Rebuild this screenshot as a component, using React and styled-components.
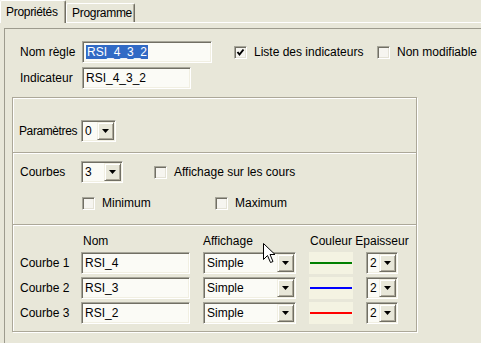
import React from 'react';
import styled, { createGlobalStyle } from 'styled-components';

const GlobalStyle = createGlobalStyle`
  html, body {
    margin: 0;
    padding: 0;
    background: #e8e7d9;
  }
  body {
    font-family: "Liberation Sans", Arial, sans-serif;
    font-size: 12px;
    color: #000;
    overflow: hidden;
  }
`;

const Window = styled.div`
  position: relative;
  width: 481px;
  height: 343px;
  overflow: hidden;
  background: #e8e7d9;
`;

const TabStrip = styled.div`
  display: flex;
  align-items: flex-end;
  height: 22px;
  position: relative;
  z-index: 1;
`;

const Tab = styled.div`
  width: ${(p) => p.$width}px;
  height: ${(p) => (p.$active ? 23 : 19)}px;
  margin-bottom: ${(p) => (p.$active ? -1 : 0)}px;
  box-sizing: border-box;
  padding-left: 5px;
  display: flex;
  align-items: center;
  font-size: 12px;
  letter-spacing: -0.3px;
  white-space: nowrap;
  background: #e8e7d9;
  border-top: 1px solid #fff;
  border-left: 1px solid #fff;
  border-right: 1px solid #716f64;
  box-shadow: inset -1px 0 0 #aca899;
  border-radius: 2px 2px 0 0;
`;

const Panel = styled.div`
  border-top: 1px solid #fff;
  padding: 5px 0 0 4px;
`;

const Frame = styled.div`
  border-top: 1px solid #9d9b8e;
  border-left: 1px solid #9d9b8e;
  height: 320px;
  box-sizing: border-box;
`;

const TopForm = styled.div`
  display: flex;
  flex-direction: column;
  gap: 4px;
  padding: 12px 0 0 15px;
`;

const FormRow = styled.div`
  display: flex;
  align-items: center;
  height: 22px;
`;

const FieldLabel = styled.span`
  width: ${(p) => p.$width}px;
  flex: none;
  white-space: nowrap;
  letter-spacing: ${(p) => p.$tight ? '-0.4px' : 'normal'};
`;

const TextBox = styled.div`
  width: ${(p) => p.$width}px;
  height: 22px;
  flex: none;
  box-sizing: border-box;
  display: flex;
  align-items: center;
  padding-left: 3px;
  background: #fbfbf6;
  border: 1px solid;
  border-color: #a7a69a #fff #fff #a7a69a;
  box-shadow: inset 1px 1px 0 #716f64, inset -1px -1px 0 #f1efe2;
  white-space: nowrap;
`;

const Selected = styled.span`
  background: #316ac5;
  color: #fff;
  padding: 0 1px;
  line-height: 14px;
`;

const CheckItem = styled.label`
  display: flex;
  align-items: center;
  gap: 7px;
  width: ${(p) => (p.$width ? `${p.$width}px` : 'auto')};
  margin-left: ${(p) => p.$offset || 0}px;
  flex: none;
  white-space: nowrap;
`;

const CheckBox = styled.span`
  width: 13px;
  height: 13px;
  flex: none;
  box-sizing: border-box;
  display: flex;
  align-items: center;
  justify-content: center;
  background: #f6f5f0;
  border: 1px solid;
  border-color: #a7a69a #fff #fff #a7a69a;
  box-shadow: inset 1px 1px 0 #716f64, inset -1px -1px 0 #e4e2d6;
`;

const GroupBox = styled.div`
  width: 405px;
  margin: 8px 0 0 7px;
  box-sizing: border-box;
  border: 1px solid #aca899;
  box-shadow: 1px 1px 0 #fff, inset 1px 1px 0 #fff;
`;

const Section = styled.div`
  height: ${(p) => p.$height}px;
  box-sizing: border-box;
  padding: ${(p) => p.$pad || '0'};
`;

const Divider = styled.div`
  height: 2px;
  border-top: 1px solid #aca899;
  border-bottom: 1px solid #fff;
  box-sizing: border-box;
`;

const Combo = styled.div`
  width: ${(p) => p.$width}px;
  height: 22px;
  flex: none;
  box-sizing: border-box;
  display: flex;
  padding: 1px;
  background: #fbfbf6;
  border: 1px solid;
  border-color: #a7a69a #fff #fff #a7a69a;
  box-shadow: inset 1px 1px 0 #716f64, inset -1px -1px 0 #f1efe2;
`;

const ComboValue = styled.div`
  flex: 1;
  display: flex;
  align-items: center;
  padding-left: 2px;
  white-space: nowrap;
  overflow: hidden;
`;

const ComboButton = styled.div`
  width: 17px;
  flex: none;
  box-sizing: border-box;
  display: flex;
  align-items: center;
  justify-content: center;
  background: #e8e7d9;
  border: 1px solid;
  border-color: #f1efe2 #716f64 #716f64 #f1efe2;
  box-shadow: inset 1px 1px 0 #fff, inset -1px -1px 0 #aca899;
`;

const CurveGrid = styled.div`
  display: grid;
  grid-template-columns: 48px 109px 93px 44px 32px;
  grid-template-rows: 16px 22px 22px 22px;
  column-gap: 13px;
  row-gap: 3px;
  align-items: center;
`;

const ColumnHead = styled.div`
  display: flex;
  justify-content: ${(p) => (p.$center ? 'center' : 'flex-start')};
  padding-left: ${(p) => p.$indent || 0}px;
  white-space: nowrap;
  align-self: end;
  line-height: 16px;
  margin-top: -4px;
`;

const RowLabel = styled.span`
  white-space: nowrap;
`;

const Swatch = styled.div`
  height: 22px;
  display: flex;
  align-items: center;
  padding: 0 1px;
  box-sizing: border-box;
  background: #f4f3e2;
  &::after {
    content: '';
    flex: 1;
    height: 2px;
    background: ${(p) => p.$color};
  }
`;

const Pointer = styled.svg`
  position: absolute;
  left: 263px;
  top: 243px;
  pointer-events: none;
`;

const Arrow = () => (
  <svg width="7" height="4" viewBox="0 0 7 4">
    <polygon points="0,0 7,0 3.5,4" fill="#000" />
  </svg>
);

const Tick = () => (
  <svg width="9" height="9" viewBox="0 0 9 9">
    <polyline points="1.5,4 3.5,6.5 7.5,1.5" fill="none" stroke="#000" strokeWidth="2" />
  </svg>
);

const Select = ({ width, value }) => (
  <Combo $width={width}>
    <ComboValue>{value}</ComboValue>
    <ComboButton>
      <Arrow />
    </ComboButton>
  </Combo>
);

const curves = [
  { label: 'Courbe 1', name: 'RSI_4', color: '#008000' },
  { label: 'Courbe 2', name: 'RSI_3', color: '#0000ff' },
  { label: 'Courbe 3', name: 'RSI_2', color: '#ff0000' },
];

export default function App() {
  return (
    <Window>
      <GlobalStyle />
      <TabStrip>
        <Tab $active $width={66}>Propriétés</Tab>
        <Tab $width={69}>Programme</Tab>
      </TabStrip>
      <Panel>
        <Frame>
          <TopForm>
            <FormRow>
              <FieldLabel $width={62}>Nom règle</FieldLabel>
              <TextBox $width={130}>
                <Selected>RSI_4_3_2</Selected>
              </TextBox>
              <CheckItem $offset={22} $width={143}>
                <CheckBox>
                  <Tick />
                </CheckBox>
                Liste des indicateurs
              </CheckItem>
              <CheckItem>
                <CheckBox />
                Non modifiable
              </CheckItem>
            </FormRow>
            <FormRow>
              <FieldLabel $width={62}>Indicateur</FieldLabel>
              <TextBox $width={109}>RSI_4_3_2</TextBox>
            </FormRow>
          </TopForm>

          <GroupBox>
            <Section $height={54} $pad="22px 0 0 6px">
              <FormRow>
                <FieldLabel $width={62} $tight>Paramètres</FieldLabel>
                <Select width={35} value="0" />
              </FormRow>
            </Section>
            <Divider />
            <Section $height={70} $pad="7px 0 0 7px">
              <FormRow>
                <FieldLabel $width={61}>Courbes</FieldLabel>
                <Select width={42} value="3" />
                <CheckItem $offset={31}>
                  <CheckBox />
                  Affichage sur les cours
                </CheckItem>
              </FormRow>
              <FormRow style={{ marginTop: 9 }}>
                <FieldLabel $width={62} />
                <CheckItem $width={133}>
                  <CheckBox />
                  Minimum
                </CheckItem>
                <CheckItem>
                  <CheckBox />
                  Maximum
                </CheckItem>
              </FormRow>
            </Section>
            <Divider />
            <Section $height={105} $pad="7px 0 0 7px">
              <CurveGrid>
                <span />
                <ColumnHead $indent={2}>Nom</ColumnHead>
                <ColumnHead>Affichage</ColumnHead>
                <ColumnHead $center>Couleur</ColumnHead>
                <ColumnHead $center>Epaisseur</ColumnHead>
                {curves.map((c) => (
                  <React.Fragment key={c.label}>
                    <RowLabel>{c.label}</RowLabel>
                    <TextBox $width={109}>{c.name}</TextBox>
                    <Select width={93} value="Simple" />
                    <Swatch $color={c.color} />
                    <Select width={32} value="2" />
                  </React.Fragment>
                ))}
              </CurveGrid>
            </Section>
          </GroupBox>
        </Frame>
      </Panel>

      <Pointer width="13" height="21" viewBox="0 0 13 21">
        <path
          d="M0.5 0.5 L0.5 16.5 L4.5 12.5 L7.5 19.5 L10 18.5 L7 11.5 L12 11.5 Z"
          fill="#fff"
          stroke="#000"
          strokeWidth="1"
          strokeLinejoin="miter"
        />
      </Pointer>
    </Window>
  );
}
